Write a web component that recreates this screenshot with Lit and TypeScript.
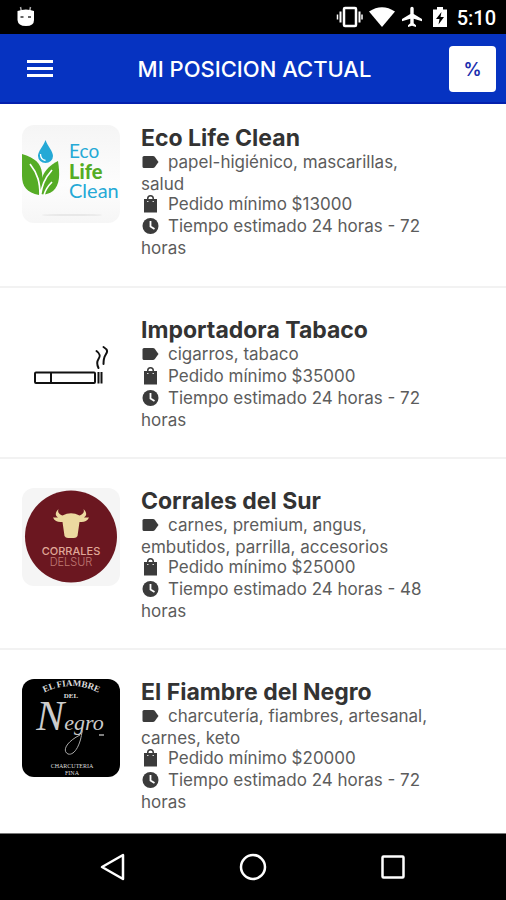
import { LitElement, html, svg, css } from "lit";
import { customElement, property } from "lit/decorators.js";

interface Shop {
  name: string;
  tags: string;
  minimum: string;
  time: string;
  logo: unknown;
}

const ecoLogo = svg`<svg viewBox="0 0 98 98" role="img" aria-label="Logo Eco Life Clean">
  <defs>
    <linearGradient id="eco" x2="0" y2="1"><stop offset="0" stop-color="#f5f5f5"/><stop offset=".6" stop-color="#fdfdfd"/><stop offset="1" stop-color="#f6f6f6"/></linearGradient>
  </defs>
  <rect width="98" height="98" fill="url(#eco)"/>
  <ellipse cx="50" cy="90" rx="30" ry="1" fill="#e8e8e8"/>
  <path d="M23.500 15C21 22 16 26 16 31a7.500 7 0 0 0 15 0C31 26 26 22 23.500 15z" fill="#25a9d6"/>
  <path d="M18.500 29c0 4 2 6 5 6.500" fill="none" stroke="#fff" stroke-width="1.300"/>
  <path d="M0 29C13 33 19 38 20 48C21 57 20 65 17 70C5 68 0 61 0 51z" fill="#55ac25"/>
  <path d="M36 36C38 49 38 60 31 66C27 69 22 70 19 69C17 57 20 44 36 36z" fill="#55ac25"/>
  <path d="M8 39C16 49 18 58 18 70M30 45C22 54 20 61 18.500 70M30 57C25 62 23 66 22 70" fill="none" stroke="#fff" stroke-width="1.700"/>
  <g font-family="Lato, sans-serif">
    <text x="47" y="33" font-size="19" fill="#25a9d6">Eco</text>
    <text x="47" y="54" font-size="20" font-weight="900" fill="#55ac25">Life</text>
    <text x="47" y="73" font-size="20" fill="#25a9d6">Clean</text>
  </g>
</svg>`;

const tobaccoLogo = svg`<svg viewBox="0 0 98 98" role="img" aria-label="Logo Importadora Tabaco">
  <g fill="none" stroke="#111" stroke-width="2">
    <rect x="13" y="55.500" width="60" height="10.500" rx="1"/>
    <path d="M29 55.500v10.500M76.500 55v11.500M79.500 55v11.500"/>
    <path d="M74.500 34c4 3 4 5 2 8s-2 5 0 9M81.500 30c5 3 4 5 2 8s-2 5-2 9" stroke-linecap="round"/>
  </g>
</svg>`;

const corralesLogo = svg`<svg viewBox="0 0 98 98" role="img" aria-label="Logo Corrales del Sur">
  <rect width="98" height="98" fill="#f5f5f5"/>
  <circle cx="49" cy="48.500" r="46" fill="#6b1720"/>
  <path d="M36.500 21c-1 3 0 5 4 6.500Q49 23 57.500 27.500c4-1.500 5-3.500 4-6.500c4 4 3 7 .5 8.500h5c-2 4-5 5-9.500 4.500L55.500 48q-1 2-3.500 2h-6q-2.500 0-3.500-2L40.500 34c-4.500.5-7.500-.5-9.500-4.500h5c-2.500-1.500-3.500-4.500.5-8.500z" fill="#ecd9a0"/>
  <text x="49" y="67" text-anchor="middle" font-size="11" font-weight="500" fill="#e0a898">CORRALES</text>
  <text x="49" y="78" text-anchor="middle" font-size="11" font-weight="300" fill="#c07a74">DELSUR</text>
</svg>`;

const negroLogo = svg`<svg viewBox="0 0 98 98" role="img" aria-label="Logo El Fiambre del Negro">
  <defs><path id="arc" d="M13 19Q49-5 86 19"/></defs>
  <rect width="98" height="98" fill="#000"/>
  <g class="serif" fill="#ddd" text-anchor="middle">
    <text font-size="9" font-weight="700"><textPath href="#arc" startOffset="50%">EL FIAMBRE</textPath></text>
    <text x="49" y="19" font-size="7" font-weight="700">DEL</text>
    <text x="48" y="51" font-size="22" font-style="italic" fill="#ccc"><tspan font-size="42">N</tspan>egro</text>
    <text x="50" y="89" font-size="6">CHARCUTERIA</text>
    <text x="50" y="96" font-size="6">FINA</text>
  </g>
  <path d="M60 52C59 64 53 77 46 75C40 72 44 63 58 56" fill="none" stroke="#aaa"/>
  <path d="M77 56h5" stroke="#aaa" stroke-width="1.500"/>
</svg>`;

const tagIcon = svg`<svg class="icon" viewBox="0 0 18 22" aria-hidden="true"><path d="M3 4h9q1 0 1.700.8L17.500 10l-3.800 5.200q-.7.800-1.700.8H3q-1.500 0-1.500-1.500v-9Q1.500 4 3 4z"/></svg>`;
const bagIcon = svg`<svg class="icon" viewBox="0 0 18 22" aria-hidden="true"><path fill-rule="evenodd" d="M3 5h3V4.500a3.500 3.500 0 0 1 7 0V5h3v13.500H3zM7.500 5h4V4.500a2 2 0 0 0-4 0z"/><path d="M6.800 7v1M12.200 7v1" stroke="#fff" stroke-width="1.200"/></svg>`;
const clockIcon = svg`<svg class="icon" viewBox="0 0 18 22" aria-hidden="true"><circle cx="9.500" cy="10" r="8"/><path d="M9.500 5v5.500l4 2.500" fill="none" stroke="#fff" stroke-width="1.800"/></svg>`;

const shops: Shop[] = [
  { name: "Eco Life Clean", tags: "papel-higiénico, mascarillas, salud", minimum: "$13000", time: "24 horas - 72 horas", logo: ecoLogo },
  { name: "Importadora Tabaco", tags: "cigarros, tabaco", minimum: "$35000", time: "24 horas - 72 horas", logo: tobaccoLogo },
  { name: "Corrales del Sur", tags: "carnes, premium, angus, embutidos, parrilla, accesorios", minimum: "$25000", time: "24 horas - 48 horas", logo: corralesLogo },
  { name: "El Fiambre del Negro", tags: "charcutería, fiambres, artesanal, carnes, keto", minimum: "$20000", time: "24 horas - 72 horas", logo: negroLogo },
];

@customElement("shop-card")
export class ShopCard extends LitElement {
  @property({ attribute: false }) shop!: Shop;

  static styles = css`
    :host { display: flex; align-items: flex-start; gap: 21px; }
    .logo { flex: none; width: 98px; height: 98px; border-radius: 12px; overflow: hidden; }
    .logo svg { display: block; width: 100%; height: 100%; }
    .serif { font-family: "Liberation Serif", serif; }
    .body { flex: 1; min-width: 0; }
    h2, p { margin: 0; }
    h2 { font-size: 23px; line-height: 27px; font-weight: 700; color: #333; }
    p { font-size: 17px; line-height: 20px; font-weight: 400; color: #5c5c5c; }
    .icon { width: 18px; height: 22px; margin-right: 9px; vertical-align: top; fill: #3b3b3b; }
  `;

  render() {
    const s = this.shop;
    return html`
      <div class="logo">${s.logo}</div>
      <div class="body">
        <h2>${s.name}</h2>
        <p>${tagIcon}${s.tags}</p>
        <p>${bagIcon}${`Pedido mínimo ${s.minimum}`}</p>
        <p>${clockIcon}${`Tiempo estimado ${s.time}`}</p>
      </div>
    `;
  }
}

@customElement("app-root")
export class AppRoot extends LitElement {
  static styles = css`
    :host {
      display: flex; flex-direction: column; height: 100vh; overflow: hidden;
      background: #fff; font-family: Inter, "Liberation Sans", sans-serif;
    }
    svg { display: block; }
    button { border: 0; padding: 0; background: none; color: inherit; font: inherit; cursor: pointer; }
    .status {
      flex: none; display: flex; align-items: center; height: 34px; padding: 0 10px 0 16px;
      box-sizing: border-box; background: #000; color: #fff;
    }
    .android { margin-right: auto; }
    .signals { display: flex; align-items: center; gap: 6px; }
    .clock { padding-top: 2px; font: 500 20px/24px Roboto, sans-serif; }
    .bar {
      flex: none; display: flex; align-items: center; justify-content: space-between; height: 70px;
      padding: 0 10px 0 20px; box-sizing: border-box; background: #0633c1;
      box-shadow: inset 0 -2px #0320ad; color: #fff;
    }
    .menu { display: grid; place-items: center; width: 40px; height: 40px; }
    h1 { margin: 0; font-size: 22px; line-height: 28px; font-weight: 500; }
    .offers {
      width: 47px; height: 46px; border-radius: 4px; background: #fff;
      color: #1c2fae; font-size: 18px; font-weight: 600;
    }
    .list { flex: 1; min-height: 0; overflow: hidden; margin: 0; padding: 0; list-style: none; }
    .row { padding: 29px 64px 27px 22px; border-bottom: 2px solid #f2f2f2; }
    .row:first-child { padding-top: 21px; padding-bottom: 28px; }
    .nav {
      flex: none; display: flex; justify-content: center; gap: 92px; height: 67px;
      box-sizing: border-box; border-top: 1px solid #777; background: #000;
    }
    .key { display: grid; place-items: center; width: 48px; }
  `;

  render() {
    return html`
      <div class="status">
        <svg class="android" width="20" height="22" viewBox="0 0 20 22" aria-hidden="true">
          <path d="M5.500 6L4.500 1M13.500 6l1-5" stroke="#aaa" stroke-width="1.500"/>
          <path d="M1.500 5Q10 2 18 5v9q0 6-8 6t-8.500-6z" fill="#fff"/>
          <path d="M4.500 11h3M12 11h3" stroke="#333" stroke-width="1.500"/>
        </svg>
        <div class="signals">
          <svg width="27" height="22" viewBox="0 0 27 22" fill="none" stroke="#fff" aria-hidden="true">
            <rect x="8" y="2" width="12" height="18" rx="1" stroke-width="2.500"/>
            <path d="M4.500 5.500v11M23.500 5.500v11" stroke-width="2"/><path d="M1.500 8.500v5M26 8.500v5" stroke-width="1.500"/>
          </svg>
          <svg width="26" height="22" viewBox="0 0 26 22" aria-hidden="true"><path d="M0 5.500Q13-3 26 5.500L13 21z" fill="#fff"/></svg>
          <svg width="22" height="22" viewBox="0 0 22 22" aria-hidden="true"><path d="M9.300 2.500a1.700 1.700 0 0 1 3.400 0V8L21 13v2.200l-8.300-2.500v4.500l2.300 2V21l-4-1.200L7 21v-1.800l2.300-2v-4.500L1 15.200V13l8.300-5z" fill="#fff"/></svg>
          <svg width="22" height="22" viewBox="0 0 22 22" aria-hidden="true"><path d="M4 3.500h4V1h6v2.500h4V21H4z" fill="#fff"/><path d="M12.500 6L7 13h3.500l-1 5.500L15 11h-3.500z" fill="#000"/></svg>
          <span class="clock">5:10</span>
        </div>
      </div>
      <header class="bar">
        <button class="menu" aria-label="Abrir menú">
          <svg width="26" height="20" viewBox="0 0 26 20" fill="#fff"><path d="M0 1h26v3H0zM0 8h26v3H0zM0 15h26v3H0z"/></svg>
        </button>
        <h1>MI POSICION ACTUAL</h1>
        <button class="offers">%</button>
      </header>
      <ul class="list">
        ${shops.map((shop) => html`<li class="row"><shop-card .shop=${shop}></shop-card></li>`)}
      </ul>
      <nav class="nav">
        <button class="key" aria-label="Atrás"><svg width="28" height="28" viewBox="0 0 28 28" fill="none" stroke="#fff" stroke-width="2.500" stroke-linejoin="round"><path d="M24 2v24L3 14z"/></svg></button>
        <button class="key" aria-label="Inicio"><svg width="28" height="28" viewBox="0 0 28 28" fill="none" stroke="#fff" stroke-width="2.500"><circle cx="14" cy="14" r="12"/></svg></button>
        <button class="key" aria-label="Recientes"><svg width="28" height="28" viewBox="0 0 28 28" fill="none" stroke="#fff" stroke-width="2.500"><rect x="3.500" y="3.500" width="21" height="21" rx="1"/></svg></button>
      </nav>
    `;
  }
}
